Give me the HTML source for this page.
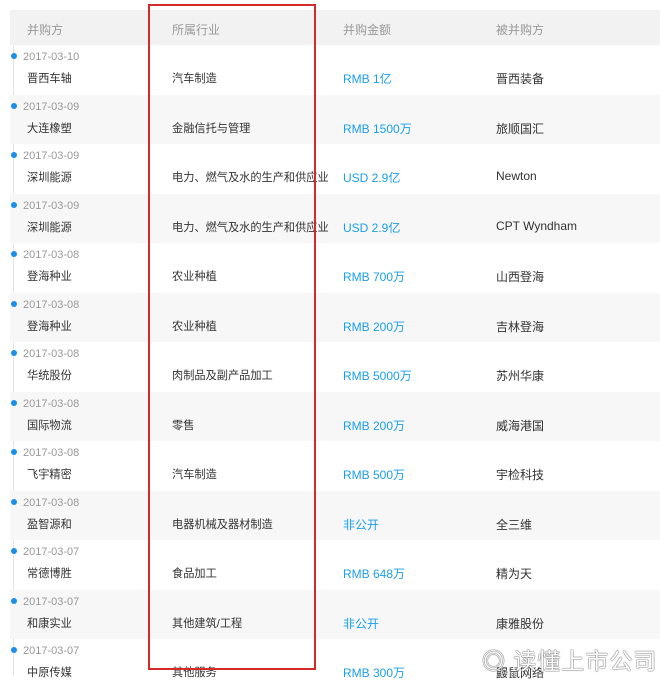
<!DOCTYPE html>
<html><head><meta charset="utf-8"><style>
body{margin:0;width:660px;height:675px;overflow:hidden;background:#fff;font-family:"Liberation Sans","Noto Sans CJK SC",sans-serif;position:relative}
.hd{position:absolute;left:10px;top:10px;width:650px;height:35px;background:#f2f2f2;color:#999;font-size:12px}
.hd span{position:absolute;top:11px}
.line{position:absolute;left:13px;top:45px;width:1px;height:630px;background:#e3e3e3}
.row{position:absolute;left:10px;width:650px;height:49.5px;font-size:11.2px;color:#333}
.row.g{background:#f7f7f7}
.dot{position:absolute;left:1px;top:8px;width:6px;height:6px;border-radius:50%;background:#1a8fe8}
.d{position:absolute;left:13px;top:6px;color:#999;font-size:11px}
.n{position:absolute;left:17px;top:25px}
.i{position:absolute;left:162px;top:25px}
.a{position:absolute;left:333px;top:25px;color:#1a9fe8;font-size:12px}
.t{position:absolute;left:486px;top:25px;font-size:12px}
.box{position:absolute;left:148px;top:4px;width:164px;height:662px;border:2px solid #d42a2a}
.wm{position:absolute;left:482px;top:642px;font-size:23px;color:#fff;text-shadow:0 0 1px #666,0 0 1px #666,0 0 1px #666;letter-spacing:1px}
</style></head><body>
<div class="hd"><span style="left:17px">并购方</span><span style="left:162px">所属行业</span><span style="left:333px">并购金额</span><span style="left:486px">被并购方</span></div>
<div class="line"></div>
<div class="row" style="top:45px"><i class="dot"></i><span class="d">2017-03-10</span><span class="n">晋西车轴</span><span class="i">汽车制造</span><span class="a">RMB 1亿</span><span class="t">晋西装备</span></div>
<div class="row g" style="top:94.5px"><i class="dot"></i><span class="d">2017-03-09</span><span class="n">大连橡塑</span><span class="i">金融信托与管理</span><span class="a">RMB 1500万</span><span class="t">旅顺国汇</span></div>
<div class="row" style="top:144px"><i class="dot"></i><span class="d">2017-03-09</span><span class="n">深圳能源</span><span class="i">电力、燃气及水的生产和供应业</span><span class="a">USD 2.9亿</span><span class="t">Newton</span></div>
<div class="row g" style="top:193.5px"><i class="dot"></i><span class="d">2017-03-09</span><span class="n">深圳能源</span><span class="i">电力、燃气及水的生产和供应业</span><span class="a">USD 2.9亿</span><span class="t">CPT Wyndham</span></div>
<div class="row" style="top:243px"><i class="dot"></i><span class="d">2017-03-08</span><span class="n">登海种业</span><span class="i">农业种植</span><span class="a">RMB 700万</span><span class="t">山西登海</span></div>
<div class="row g" style="top:292.5px"><i class="dot"></i><span class="d">2017-03-08</span><span class="n">登海种业</span><span class="i">农业种植</span><span class="a">RMB 200万</span><span class="t">吉林登海</span></div>
<div class="row" style="top:342px"><i class="dot"></i><span class="d">2017-03-08</span><span class="n">华统股份</span><span class="i">肉制品及副产品加工</span><span class="a">RMB 5000万</span><span class="t">苏州华康</span></div>
<div class="row g" style="top:391.5px"><i class="dot"></i><span class="d">2017-03-08</span><span class="n">国际物流</span><span class="i">零售</span><span class="a">RMB 200万</span><span class="t">威海港国</span></div>
<div class="row" style="top:441px"><i class="dot"></i><span class="d">2017-03-08</span><span class="n">飞宇精密</span><span class="i">汽车制造</span><span class="a">RMB 500万</span><span class="t">宇检科技</span></div>
<div class="row g" style="top:490.5px"><i class="dot"></i><span class="d">2017-03-08</span><span class="n">盈智源和</span><span class="i">电器机械及器材制造</span><span class="a">非公开</span><span class="t">全三维</span></div>
<div class="row" style="top:540px"><i class="dot"></i><span class="d">2017-03-07</span><span class="n">常德博胜</span><span class="i">食品加工</span><span class="a">RMB 648万</span><span class="t">精为天</span></div>
<div class="row g" style="top:589.5px"><i class="dot"></i><span class="d">2017-03-07</span><span class="n">和康实业</span><span class="i">其他建筑/工程</span><span class="a">非公开</span><span class="t">康雅股份</span></div>
<div class="row" style="top:639px"><i class="dot"></i><span class="d">2017-03-07</span><span class="n">中原传媒</span><span class="i">其他服务</span><span class="a">RMB 300万</span><span class="t">鼹鼠网络</span></div>
<div class="box"></div>
<div class="wm">◎ 读懂上市公司</div>
</body></html>
